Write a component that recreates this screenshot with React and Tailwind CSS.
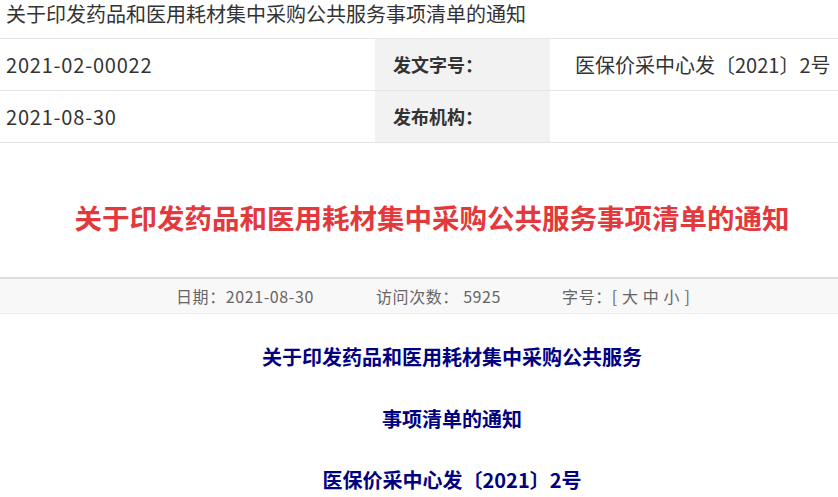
import React from 'react';

const font = { fontFamily: '"Noto Sans CJK SC", "Noto Sans", sans-serif' };

export default function App() {
    return <div className="w-[838px] h-[497px] overflow-hidden bg-white text-[#333]" style={font}>
        <div className="h-[38px] pl-[6px] text-[20px] leading-[28px] text-[#333]">
            关于印发药品和医用耗材集中采购公共服务事项清单的通知
        </div>
        <table className="w-full border-collapse text-[20px]">
            <tbody>
                <tr className="h-[52px] border-y border-[#e5e5e5]">
                    <td className="w-[375px] pl-[6px] tracking-[0.8px]">2021-02-00022</td>
                    <td className="w-[175px] pl-[18px] bg-[#f2f2f2] font-bold text-[18px]">发文字号：</td>
                    <td className="pl-[25px]">医保价采中心发〔2021〕2号</td>
                </tr>
                <tr className="h-[52px] border-b border-[#e5e5e5]">
                    <td className="pl-[6px] tracking-[0.8px]">2021-08-30</td>
                    <td className="pl-[18px] bg-[#f2f2f2] font-bold text-[18px]">发布机构：</td>
                    <td></td>
                </tr>
            </tbody>
        </table>
        <div className="h-[134px] flex items-center justify-center pl-[26px] pt-[16px]">
            <h1 className="text-[27.5px] font-bold text-[#e4393c] leading-none">关于印发药品和医用耗材集中采购公共服务事项清单的通知</h1>
        </div>
        <div className="h-[37px] border-t-2 border-[#dddddd] border-b border-b-[#ececec] bg-[#f8f8f8] flex items-center text-[16px] text-[#666] tracking-[0.6px]">
            <span className="ml-[176px]">日期：2021-08-30</span>
            <span className="ml-[62px]">访问次数：&nbsp;5925</span>
            <span className="ml-[61px]">字号：[&nbsp;大&nbsp;中&nbsp;小&nbsp;]</span>
        </div>
        <div className="pl-[66px] text-center text-[#000080] font-bold text-[20px] leading-[28px]">
            <p className="mt-[29px]">关于印发药品和医用耗材集中采购公共服务</p>
            <p className="mt-[34px]">事项清单的通知</p>
            <p className="mt-[33px]">医保价采中心发〔2021〕2号</p>
        </div>
    </div>;
}
